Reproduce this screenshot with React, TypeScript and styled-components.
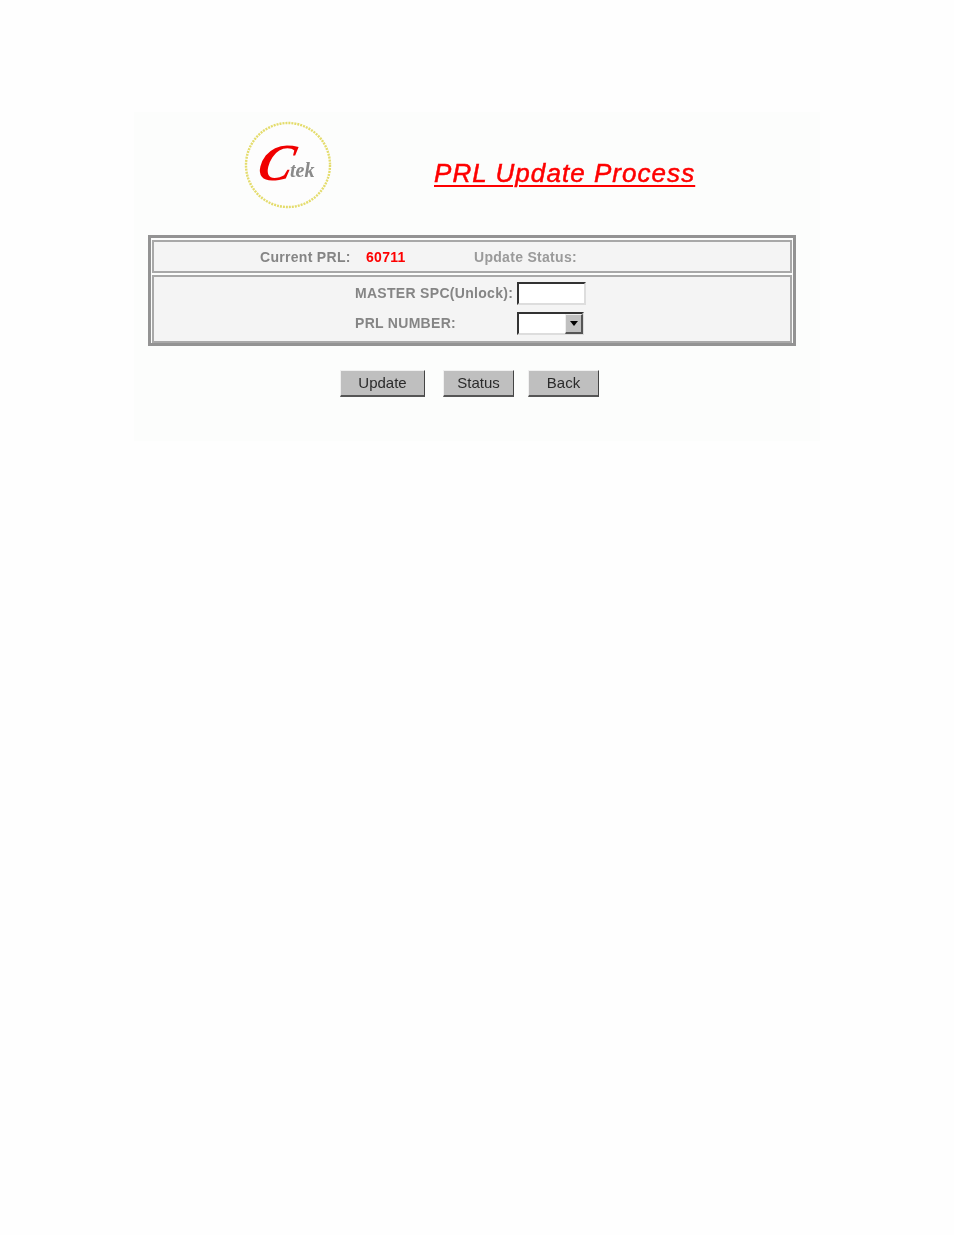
import { createGlobalStyle, styled } from 'styled-components';

const GlobalStyle = createGlobalStyle`
  html, body {
    margin: 0;
    background: #fefefe;
  }
  body {
    font-family: "Liberation Sans", Arial, sans-serif;
  }
`;

const Page = styled.div`
  width: 954px;
  height: 1235px;
  padding: 112px 0 0 134px;
  box-sizing: border-box;
`;

const Panel = styled.div`
  width: 686px;
  height: 329px;
  padding: 9px 24px 0 14px;
  box-sizing: border-box;
  background: #fcfdfc;
  filter: blur(0.35px);
`;

const Header = styled.div`
  display: flex;
  height: 114px;
`;

const Logo = styled.svg`
  width: 90px;
  height: 90px;
  margin-left: 95px;
  flex: none;
`;

const Title = styled.h1`
  margin: 37px 0 0 101px;
  font-size: 26px;
  line-height: 30px;
  font-weight: 400;
  font-style: italic;
  letter-spacing: 1.05px;
  color: #fe0000;
  text-decoration: underline;
  text-decoration-thickness: 2px;
  text-underline-offset: 3px;
  -webkit-text-stroke: 0.5px #fe0000;
  white-space: nowrap;
`;

const Frame = styled.div`
  width: 648px;
  height: 111px;
  padding: 2px 1px 1px;
  box-sizing: border-box;
  border: 3px solid #939393;
  display: flex;
  flex-direction: column;
  gap: 2px;
`;

const Cell = styled.div<{ $height: number }>`
  height: ${(p) => p.$height}px;
  flex: none;
  box-sizing: border-box;
  border: 2px solid #a8a8a8;
  background: #f4f4f4;
`;

const StatusRow = styled.div`
  display: flex;
  align-items: center;
  height: 100%;
  padding-left: 106px;
  box-sizing: border-box;
`;

const Label = styled.span<{ $width?: number; $light?: boolean }>`
  flex: none;
  width: ${(p) => (p.$width ? `${p.$width}px` : 'auto')};
  font-size: 14px;
  font-weight: 700;
  letter-spacing: 0.3px;
  color: ${(p) => (p.$light ? '#9a9a9a' : '#858585')};
  white-space: nowrap;
`;

const Value = styled.span`
  width: 108px;
  flex: none;
  font-size: 14px;
  font-weight: 700;
  letter-spacing: 0.3px;
  color: #fe0000;
`;

const FormGrid = styled.div`
  display: grid;
  grid-template-columns: 162px auto;
  grid-auto-rows: 30px;
  align-items: center;
  padding: 1px 0 0 201px;
`;

const TextBox = styled.div`
  width: 69px;
  height: 23px;
  box-sizing: border-box;
  background: #fff;
  border: 2px solid;
  border-color: #333 #ddd #ddd #333;
`;

const SelectBox = styled.div`
  position: relative;
  width: 67px;
  height: 23px;
  box-sizing: border-box;
  background: #fff;
  border: 2px solid;
  border-color: #333 #ddd #ddd #333;
`;

const SelectArrow = styled.div`
  position: absolute;
  top: 0;
  right: -1px;
  width: 18px;
  height: 20px;
  box-sizing: border-box;
  display: flex;
  align-items: center;
  justify-content: center;
  background: #c0c0c0;
  border: solid;
  border-width: 1px 2px 2px 1px;
  border-color: #eee #555 #555 #eee;
`;

const Caret = styled.div`
  width: 0;
  height: 0;
  border-left: 4px solid transparent;
  border-right: 4px solid transparent;
  border-top: 5px solid #000;
`;

const Actions = styled.div`
  display: flex;
  margin: 24px 0 0 192px;
`;

const Button = styled.button<{ $width: number; $gap: number }>`
  width: ${(p) => p.$width}px;
  height: 27px;
  margin-right: ${(p) => p.$gap}px;
  padding: 0 0 2px;
  box-sizing: border-box;
  font-family: inherit;
  font-size: 15px;
  color: #2b2b2b;
  background: #bfbfbf;
  border: solid;
  border-width: 1px 1px 2px 1px;
  border-color: #f0f0f0 #444 #555 #f0f0f0;
`;

const App = () => (
  <Page>
    <GlobalStyle />
    <Panel>
      <Header>
        <Logo viewBox="0 0 90 90">
          <circle cx="45" cy="44" r="42" fill="#fdfdfd" stroke="#e4dc6c" strokeWidth="2.4" strokeDasharray="2 1" />
          <text x="13" y="59" fontFamily="Liberation Serif" fontStyle="italic" fontWeight="700" fontSize="52" fill="#f00000" transform="skewX(-14) translate(14 0)">C</text>
          <text x="47" y="56" fontFamily="Liberation Serif" fontStyle="italic" fontWeight="700" fontSize="20" fill="#8a8a8a">tek</text>
        </Logo>
        <Title>PRL Update Process</Title>
      </Header>
      <Frame>
        <Cell $height={33}>
          <StatusRow>
            <Label $width={106}>Current PRL:</Label>
            <Value>60711</Value>
            <Label $light>Update Status:</Label>
          </StatusRow>
        </Cell>
        <Cell $height={68}>
          <FormGrid>
            <Label>MASTER SPC(Unlock):</Label>
            <TextBox />
            <Label>PRL NUMBER:</Label>
            <SelectBox>
              <SelectArrow>
                <Caret />
              </SelectArrow>
            </SelectBox>
          </FormGrid>
        </Cell>
      </Frame>
      <Actions>
        <Button $width={85} $gap={18}>Update</Button>
        <Button $width={71} $gap={14}>Status</Button>
        <Button $width={71} $gap={0}>Back</Button>
      </Actions>
    </Panel>
  </Page>
);

export default App;
